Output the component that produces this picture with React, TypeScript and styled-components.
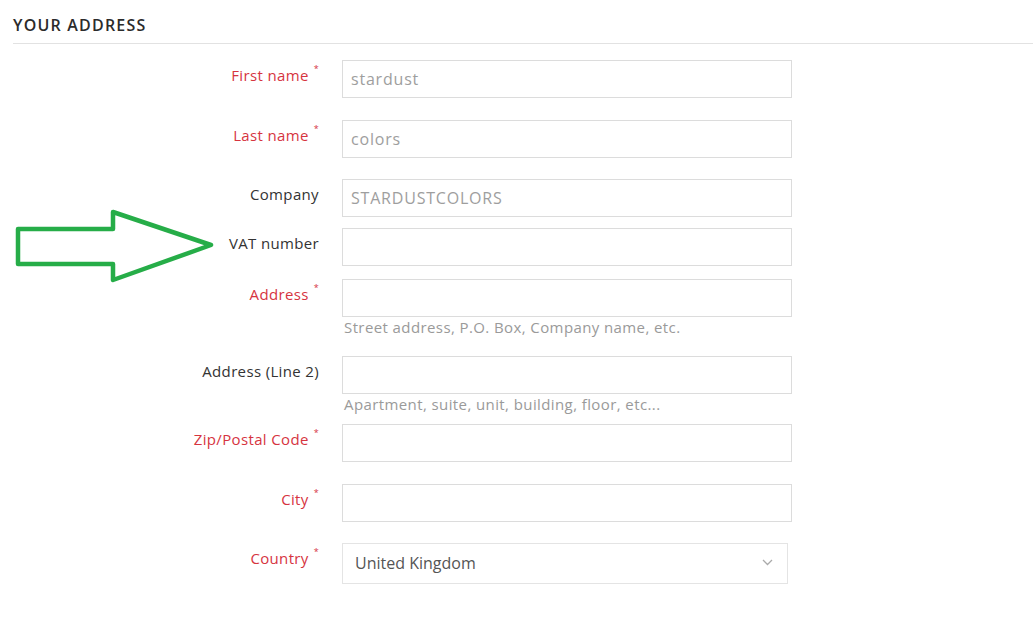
import React from "react";
import styled, { createGlobalStyle } from "styled-components";

const Global = createGlobalStyle`
  html, body { margin: 0; padding: 0; background: #fff; }
  body { font-family: "Open Sans", "Noto Sans", Arial, sans-serif; }
  * { box-sizing: border-box; }
`;

const Page = styled.div`
  position: relative;
  width: 1033px;
  height: 620px;
  padding-top: 14px;
`;

const Heading = styled.h2`
  margin: 0 0 0 13px;
  padding-bottom: 7px;
  border-bottom: 1px solid #e2e2e2;
  font-size: 16px;
  line-height: 22px;
  font-weight: 600;
  letter-spacing: 1.2px;
  color: #2b2b2b;
  text-transform: uppercase;
`;

const Form = styled.div`
  display: flex;
  flex-direction: column;
  margin-top: 16px;
`;

const Row = styled.div<{ $mb: number }>`
  display: grid;
  grid-template-columns: 319px 450px;
  column-gap: 23px;
  margin-bottom: ${(p) => p.$mb}px;
`;

const Label = styled.label<{ $required?: boolean }>`
  display: flex;
  justify-content: flex-end;
  align-items: flex-start;
  padding-top: 5px;
  font-size: 15px;
  line-height: 20px;
  letter-spacing: 0.35px;
  color: ${(p) => (p.$required ? "#d6343f" : "#333")};
`;

const Star = styled.span`
  font-size: 9px;
  line-height: 10px;
  margin-left: 5px;
  margin-top: -1px;
`;

const Field = styled.div`
  display: flex;
  flex-direction: column;
`;

const Input = styled.input`
  width: 450px;
  height: 38px;
  border: 1px solid #dcdcdc;
  padding: 0 8px;
  font-family: inherit;
  font-size: 16px;
  letter-spacing: 0.8px;
  color: #9e9e9e;
  background: #fff;
  outline: none;
  &::placeholder { color: #9e9e9e; }
`;

const Help = styled.div`
  margin-top: 0px;
  padding-left: 2px;
  font-size: 15px;
  line-height: 20px;
  letter-spacing: 0.4px;
  color: #9a9a9a;
`;

const SelectBox = styled.div`
  width: 446px;
  height: 41px;
  border: 1px solid #e4e4e4;
  display: flex;
  align-items: center;
  justify-content: space-between;
  padding: 0 14px 2px 12px;
  font-size: 16px;
  color: #555;
`;

const Arrow = styled.svg`
  position: absolute;
  left: 0;
  top: 200px;
`;

type F = { label: string; req?: boolean; value?: string; help?: string; mb: number };

const fields: F[] = [
  { label: "First name", req: true, value: "stardust", mb: 22 },
  { label: "Last name", req: true, value: "colors", mb: 21 },
  { label: "Company", value: "STARDUSTCOLORS", mb: 11 },
  { label: "VAT number", mb: 13 },
  { label: "Address", req: true, help: "Street address, P.O. Box, Company name, etc.", mb: 19 },
  { label: "Address (Line 2)", help: "Apartment, suite, unit, building, floor, etc...", mb: 10 },
  { label: "Zip/Postal Code", req: true, mb: 22 },
  { label: "City", req: true, mb: 21 },
];

export default function App() {
  return (
    <Page>
      <Global />
      <Heading>Your Address</Heading>
      <Form>
        {fields.map((f) => (
          <Row key={f.label} $mb={f.mb}>
            <Label $required={f.req}>
              {f.label}
              {f.req && <Star>*</Star>}
            </Label>
            <Field>
              <Input defaultValue={f.value ?? ""} readOnly />
              {f.help && <Help>{f.help}</Help>}
            </Field>
          </Row>
        ))}
        <Row $mb={0}>
          <Label $required>
            Country
            <Star>*</Star>
          </Label>
          <SelectBox>
            <span>United Kingdom</span>
            <svg width="11" height="7" viewBox="0 0 11 7">
              <path d="M1 1 L5.5 5.5 L10 1" fill="none" stroke="#aaa" strokeWidth="1.3" />
            </svg>
          </SelectBox>
        </Row>
      </Form>
      <Arrow width="230" height="90" viewBox="0 0 230 90">
        <path
          d="M18 29 L113 29 L113 12 L211 45 L113 80 L113 64 L18 64 Z"
          fill="none"
          stroke="#26ad48"
          strokeWidth="4.5"
          strokeLinejoin="round"
        />
      </Arrow>
    </Page>
  );
}
